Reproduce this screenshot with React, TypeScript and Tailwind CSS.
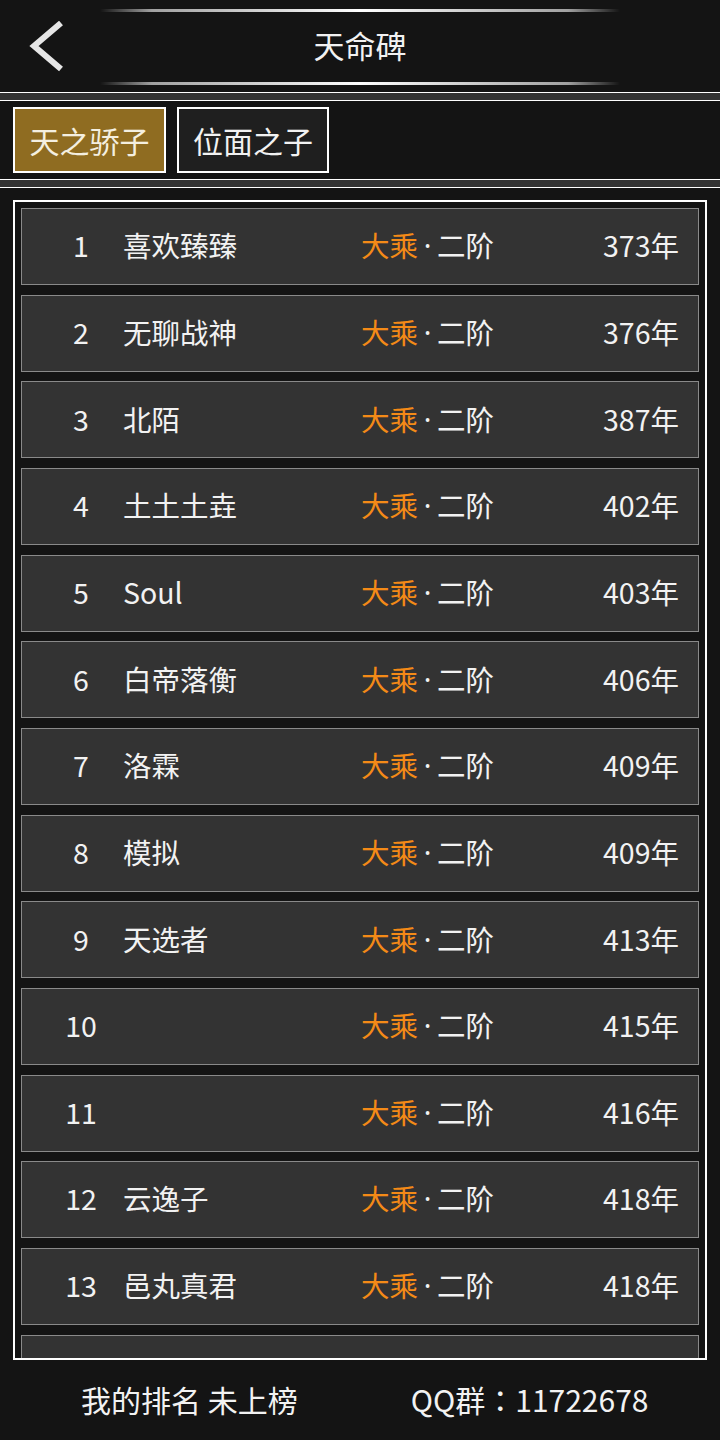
import React from "react";

const rows: { n: number; name: string; year: string }[] = [
  { n: 1, name: "喜欢臻臻", year: "373" },
  { n: 2, name: "无聊战神", year: "376" },
  { n: 3, name: "北陌", year: "387" },
  { n: 4, name: "土土土垚", year: "402" },
  { n: 5, name: "Soul", year: "403" },
  { n: 6, name: "白帝落衡", year: "406" },
  { n: 7, name: "洛霖", year: "409" },
  { n: 8, name: "模拟", year: "409" },
  { n: 9, name: "天选者", year: "413" },
  { n: 10, name: "", year: "415" },
  { n: 11, name: "", year: "416" },
  { n: 12, name: "云逸子", year: "418" },
  { n: 13, name: "邑丸真君", year: "418" },
  { n: 14, name: "", year: "" },
];

function Separator() {
  return <div className="h-[9px] border-y border-white bg-[#333333] shrink-0" />;
}

function GlowLine() {
  return (
    <div className="mx-[100px] h-[3px] bg-[linear-gradient(90deg,rgba(255,255,255,0)_0%,rgba(255,255,255,0.6)_10%,#ffffff_50%,rgba(255,255,255,0.6)_90%,rgba(255,255,255,0)_100%)]" />
  );
}

export default function App() {
  return (
    <div
      className="w-[720px] h-[1440px] bg-[#141414] text-white flex flex-col overflow-hidden"
      style={{ fontFamily: '"Noto Sans CJK SC", "Noto Sans", sans-serif' }}
    >
      {/* Header */}
      <div className="h-[92px] shrink-0 flex flex-col pt-[9px] pb-[7px]">
        <GlowLine />
        <div className="flex-1 flex items-center">
          <div className="w-[100px] pl-[28px] flex items-center">
            <svg width="40" height="52" viewBox="0 0 40 52">
              <polyline
                points="33,2 6,25 33,48"
                fill="none"
                stroke="#e6e6e6"
                strokeWidth="6"
                strokeLinejoin="miter"
              />
            </svg>
          </div>
          <div className="flex-1 text-center text-[31px] leading-none text-[#f2f2f2] -mt-[5px]">天命碑</div>
          <div className="w-[100px]" />
        </div>
        <GlowLine />
      </div>

      <Separator />

      {/* Tabs */}
      <div className="h-[78px] shrink-0 flex items-start pt-[6px] pl-[13px] gap-[11px]">
        <div className="w-[153px] h-[66px] border-2 border-white bg-[#8f6c21] flex items-center justify-center text-[30px] leading-none text-[#f4efe0]">
          天之骄子
        </div>
        <div className="w-[152px] h-[66px] border-2 border-white bg-[#1f1f1f] flex items-center justify-center text-[30px] leading-none text-[#f2f2f2]">
          位面之子
        </div>
      </div>

      <Separator />

      {/* List */}
      <div className="flex-1 pt-[12px] px-[13px] min-h-0 flex flex-col">
        <div className="h-[1160px] border-2 border-white overflow-hidden p-[6px] flex flex-col gap-[9.67px]">
          {rows.map((r) => (
            <div
              key={r.n}
              className="h-[77px] shrink-0 bg-[#333333] border border-[#8a8a8a] flex items-center text-[28.5px] leading-none"
            >
              {r.year !== "" && (
                <>
                  <div className="ml-[29px] w-[60px] text-center text-[#f2f2f2] -mt-[2px]">{r.n}</div>
                  <div className="ml-[12px] w-[238px] text-[#f2f2f2] whitespace-nowrap -mt-[2px]">{r.name}</div>
                  <div className="whitespace-nowrap flex items-center -mt-[2px]">
                    <span className="text-[#f48a17]">大乘</span>
                    <span className="inline-block w-[19px] text-center text-[#f2f2f2]" style={{ fontFamily: '"Noto Sans", sans-serif' }}>·</span>
                    <span className="text-[#f2f2f2]">二阶</span>
                  </div>
                  <div className="ml-auto pr-[19px] text-[#f2f2f2] -mt-[2px]">{r.year}年</div>
                </>
              )}
            </div>
          ))}
        </div>
      </div>

      {/* Footer */}
      <div className="h-[80px] shrink-0 flex items-center text-[30px] leading-none text-[#f2f2f2]">
        <div className="ml-[81px] whitespace-nowrap -mt-[2px]">我的排名 未上榜</div>
        <div className="ml-[113px] whitespace-nowrap -mt-[2px]">
          QQ群<span style={{ fontFamily: '"Noto Sans CJK TC", sans-serif' }}>：</span>11722678
        </div>
      </div>
    </div>
  );
}
